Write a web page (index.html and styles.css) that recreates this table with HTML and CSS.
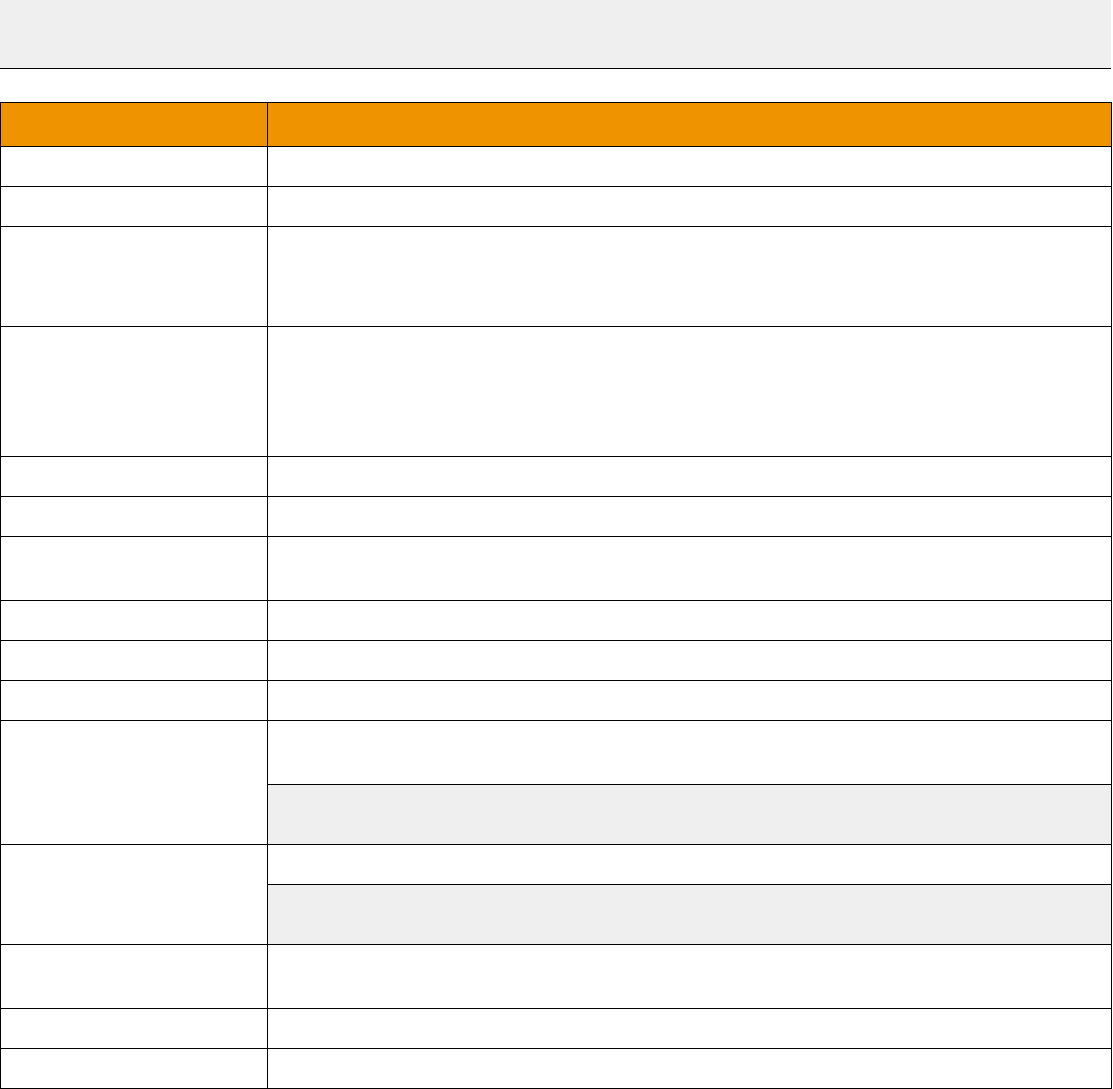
FILE: index.html
```html
<!DOCTYPE html>
<html lang="en">
<head>
<meta charset="utf-8">
<title>Table</title>
<link rel="stylesheet" href="styles.css">
</head>
<body>
<div class="topbar"></div>
<div class="grid">
  <div class="cell head"></div><div class="cell head"></div>
  <div class="cell"></div><div class="cell"></div>
  <div class="cell"></div><div class="cell"></div>
  <div class="cell"></div><div class="cell"></div>
  <div class="cell"></div><div class="cell"></div>
  <div class="cell"></div><div class="cell"></div>
  <div class="cell"></div><div class="cell"></div>
  <div class="cell"></div><div class="cell"></div>
  <div class="cell"></div><div class="cell"></div>
  <div class="cell"></div><div class="cell"></div>
  <div class="cell"></div><div class="cell"></div>
  <div class="cell span2"></div><div class="cell"></div>
  <div class="cell alt"></div>
  <div class="cell span2"></div><div class="cell"></div>
  <div class="cell alt"></div>
  <div class="cell"></div><div class="cell"></div>
  <div class="cell"></div><div class="cell"></div>
  <div class="cell"></div><div class="cell"></div>
</div>
</body>
</html>
```

FILE: styles.css
```css
html, body {
  margin: 0;
  padding: 0;
  background: #ffffff;
  font-family: "Liberation Sans", Arial, sans-serif;
}
.topbar {
  width: 1111px;
  height: 68px;
  background: #efefef;
  border-bottom: 1px solid #000;
  margin-bottom: 33px;
}
.grid {
  width: 1112px;
  box-sizing: border-box;
  display: grid;
  grid-template-columns: 267px 1fr;
  grid-template-rows: 44px 40px 40px 100px 130px 40px 40px 64px 40px 40px 40px 64px 60px 40px 60px 64px 40px 40px;
  border-top: 1px solid #000;
  border-left: 1px solid #000;
}
.cell {
  box-sizing: border-box;
  border-right: 1px solid #000;
  border-bottom: 1px solid #000;
  background: #ffffff;
}
.head {
  background: #f09300;
}
.alt {
  background: #efefef;
}
.span2 {
  grid-row: span 2;
}
```
